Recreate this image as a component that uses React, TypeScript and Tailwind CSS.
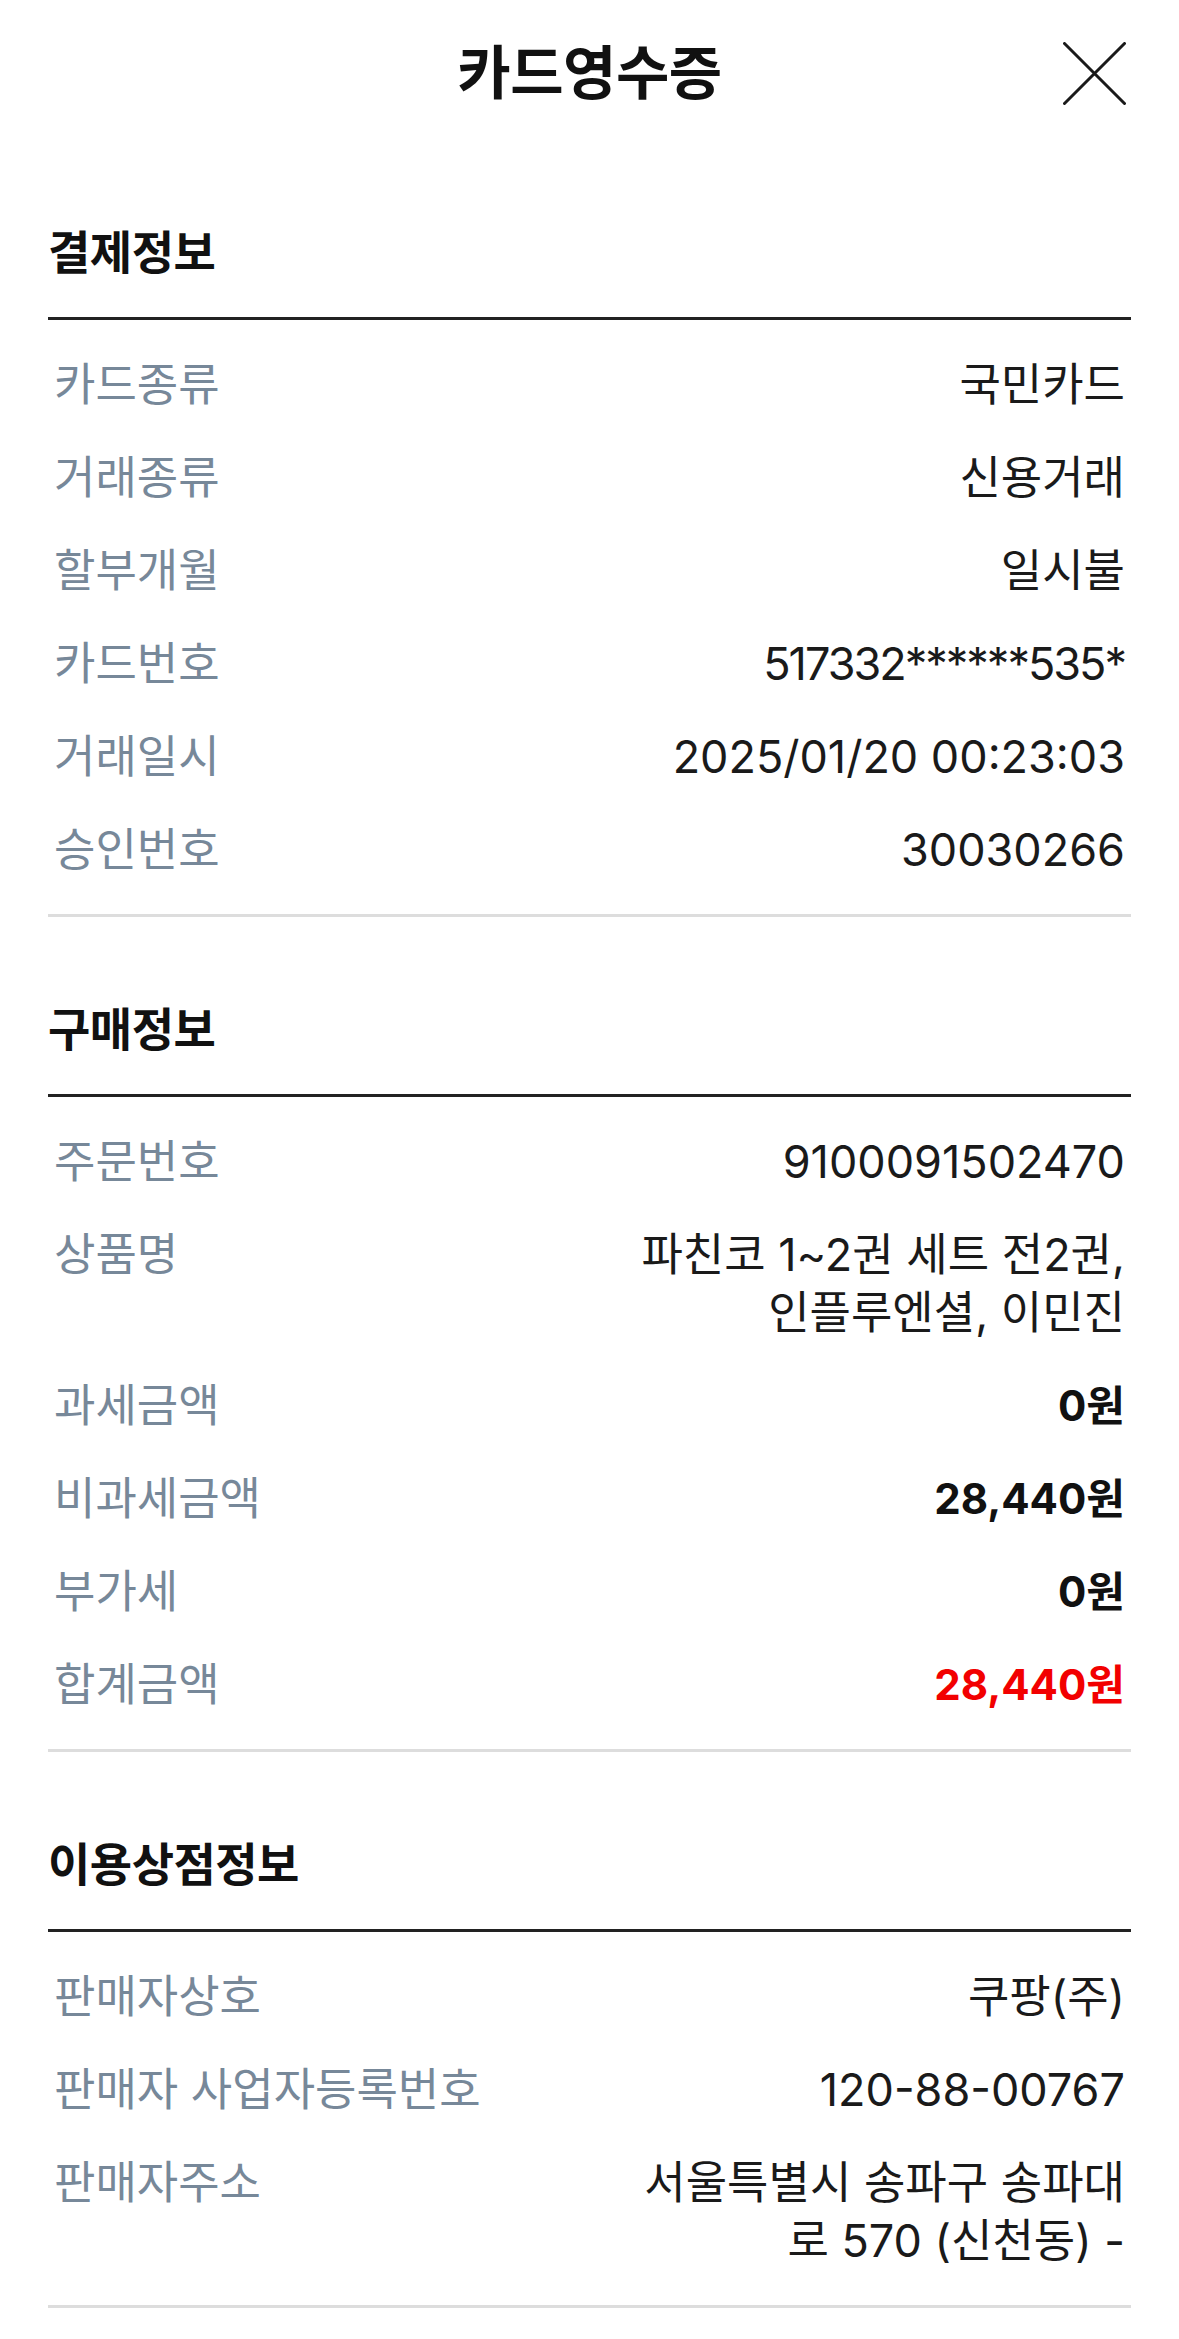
type Row = {
  label: string;
  value: string[];
  tone?: "bold" | "red";
  tight?: boolean;
};

const SECTIONS: { title: string; rows: Row[] }[] = [
  {
    title: "결제정보",
    rows: [
      { label: "카드종류", value: ["국민카드"] },
      { label: "거래종류", value: ["신용거래"] },
      { label: "할부개월", value: ["일시불"] },
      { label: "카드번호", value: ["517332******535*"], tight: true },
      { label: "거래일시", value: ["2025/01/20 00:23:03"] },
      { label: "승인번호", value: ["30030266"] },
    ],
  },
  {
    title: "구매정보",
    rows: [
      { label: "주문번호", value: ["9100091502470"] },
      { label: "상품명", value: ["파친코 1~2권 세트 전2권,", "인플루엔셜, 이민진"] },
      { label: "과세금액", value: ["0원"], tone: "bold" },
      { label: "비과세금액", value: ["28,440원"], tone: "bold" },
      { label: "부가세", value: ["0원"], tone: "bold" },
      { label: "합계금액", value: ["28,440원"], tone: "red" },
    ],
  },
  {
    title: "이용상점정보",
    rows: [
      { label: "판매자상호", value: ["쿠팡(주)"] },
      { label: "판매자 사업자등록번호", value: ["120-88-00767"] },
      { label: "판매자주소", value: ["서울특별시 송파구 송파대", "로 570 (신천동) -"] },
    ],
  },
];

function InfoRow({ row }: { row: Row }) {
  const valueClass =
    row.tone === "red"
      ? "text-[42px] font-bold text-[#f20000]"
      : row.tone === "bold"
        ? "text-[42px] font-bold text-[#111111]"
        : "text-[#1a1a1a]";
  return (
    <div className="flex items-start justify-between gap-6 px-[6px] py-[17.5px] text-[45px] leading-[58px]">
      <span className="shrink-0 text-[#778899]">{row.label}</span>
      <div className={`text-right ${valueClass} ${row.tight ? "tracking-[-2px]" : ""}`}>
        {row.value.map((v) => (
          <div key={v}>{v}</div>
        ))}
      </div>
    </div>
  );
}

export default function App() {
  return (
    <div className="min-h-screen w-[1179px] bg-white font-[family-name:Inter,'Noto_Sans_CJK_KR',sans-serif] text-[#111111]">
      {/* header */}
      <header className="relative h-[140px] pt-[43px]">
        <h1 className="text-center text-[58px] font-bold leading-[60px] tracking-[-0.5px]">
          카드영수증
        </h1>
        <button className="absolute right-[53px] top-[42px]">
          <svg width="63" height="63" viewBox="0 0 63 63" fill="none">
            <path d="M1.5 1.5 L61.5 61.5 M61.5 1.5 L1.5 61.5" stroke="#1a1a1a" strokeWidth="3" strokeLinecap="round" />
          </svg>
        </button>
      </header>

      {SECTIONS.map((s) => (
        <section key={s.title} className="px-[48px]">
          <h2 className="pb-[35.5px] pt-[81.5px] text-[46px] font-bold leading-[60px] tracking-[-0.5px]">
            {s.title}
          </h2>
          <div className="h-[3px] bg-[#222222]" />
          <div className="py-[18px]">
            {s.rows.map((r) => (
              <InfoRow key={r.label} row={r} />
            ))}
          </div>
          <div className="h-[3px] bg-[#dddddd]" />
        </section>
      ))}
    </div>
  );
}
